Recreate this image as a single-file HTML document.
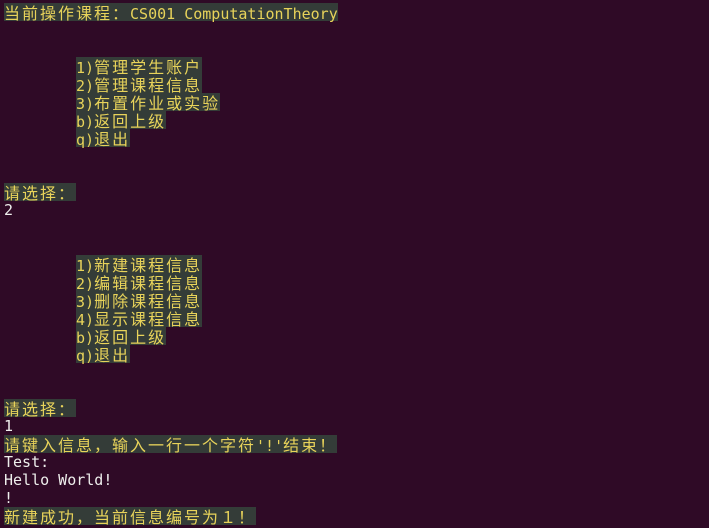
<!DOCTYPE html>
<html><head><meta charset="utf-8"><style>
html,body{margin:0;padding:0;}
body{width:709px;height:526px;background:#2f0a26;overflow:hidden;position:relative;}
.t{position:absolute;left:4px;top:3px;font-family:"DejaVu Sans Mono","Liberation Mono",monospace;font-size:15px;line-height:18px;color:#eeeeec;}
.r{height:18px;white-space:nowrap;}
.i{margin-left:72px;}
.h{background:#343c38;color:#e8d35a;display:inline-block;height:18px;vertical-align:top;}
.c{font-family:"Noto Sans CJK SC","WenQuanYi Zen Hei",sans-serif;font-size:16px;letter-spacing:2px;}
</style></head><body>
<div class="t">
<div class="r"><span class="h"><span class="c">当前操作课程：</span>CS001 ComputationTheory</span></div>
<div class="r"></div>
<div class="r"></div>
<div class="r"><span class="h i">1)<span class="c">管理学生账户</span></span></div>
<div class="r"><span class="h i">2)<span class="c">管理课程信息</span></span></div>
<div class="r"><span class="h i">3)<span class="c">布置作业或实验</span></span></div>
<div class="r"><span class="h i">b)<span class="c">返回上级</span></span></div>
<div class="r"><span class="h i">q)<span class="c">退出</span></span></div>
<div class="r"></div>
<div class="r"></div>
<div class="r"><span class="h"><span class="c">请选择：</span></span></div>
<div class="r">2</div>
<div class="r"></div>
<div class="r"></div>
<div class="r"><span class="h i">1)<span class="c">新建课程信息</span></span></div>
<div class="r"><span class="h i">2)<span class="c">编辑课程信息</span></span></div>
<div class="r"><span class="h i">3)<span class="c">删除课程信息</span></span></div>
<div class="r"><span class="h i">4)<span class="c">显示课程信息</span></span></div>
<div class="r"><span class="h i">b)<span class="c">返回上级</span></span></div>
<div class="r"><span class="h i">q)<span class="c">退出</span></span></div>
<div class="r"></div>
<div class="r"></div>
<div class="r"><span class="h"><span class="c">请选择：</span></span></div>
<div class="r">1</div>
<div class="r"><span class="h"><span class="c">请键入信息，输入一行一个字符</span>'!'<span class="c">结束！</span></span></div>
<div class="r">Test:</div>
<div class="r">Hello World!</div>
<div class="r">!</div>
<div class="r"><span class="h"><span class="c">新建成功，当前信息编号为１！</span></span></div>
</div>
</body></html>
